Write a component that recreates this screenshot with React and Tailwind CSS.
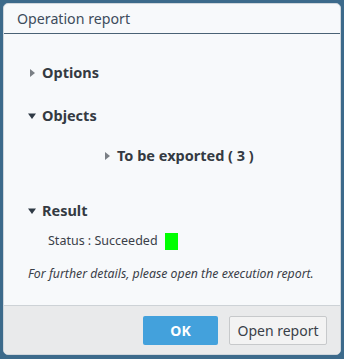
import React from "react";

const Caret = ({ open }) => (
  <svg width="8" height="8" viewBox="0 0 8 8" className="shrink-0">
    {open ? (
      <polygon points="0,1.5 8,1.5 4,7" fill="#2f3a45" />
    ) : (
      <polygon points="2,0 7,4 2,8" fill="#7a7f85" />
    )}
  </svg>
);

const App = () => {
  return (
    <div
      className="w-[344px] h-[359px] bg-[#3c6a8b] p-[3px] pb-[4px]"
      style={{ fontFamily: '"Noto Sans", "Open Sans", sans-serif' }}
    >
      <div className="h-full flex flex-col rounded-[5px] border border-[#cfd6dc] bg-[#f7f9fb] overflow-hidden">
        {/* title */}
        <div className="h-[30px] shrink-0 flex items-center pl-[13px] border-b border-[#4a6275] text-[14.2px] text-[#3d4c5c]">
          Operation report
        </div>

        {/* body */}
        <div className="flex-1 flex flex-col pl-[24px] pr-3 text-[#343a42]">
          <div className="flex items-center gap-[6px] mt-[29px] h-[20px]">
            <Caret />
            <span className="font-bold text-[14.5px]">Options</span>
          </div>

          <div className="flex items-center gap-[6px] mt-[23px] h-[20px]">
            <Caret open />
            <span className="font-bold text-[14.5px]">Objects</span>
          </div>

          <div className="flex items-center gap-[6px] mt-[20px] ml-[75px] h-[20px]">
            <Caret />
            <span className="font-bold text-[14.5px]">To be exported ( 3 )</span>
          </div>

          <div className="flex items-center gap-[6px] mt-[35px] h-[20px]">
            <Caret open />
            <span className="font-bold text-[14.5px]">Result</span>
          </div>

          <div className="flex items-center mt-[10px] ml-[20px] h-[20px] text-[12.5px] text-[#3a4048]">
            <span>Status : Succeeded</span>
            <span className="ml-[7px] w-[13px] h-[17px] bg-[#00ff00]" />
          </div>

          <div className="mt-[14px] text-[12.3px] italic text-[#3a4048]">
            For further details, please open the execution report.
          </div>
        </div>

        {/* footer */}
        <div className="h-[49px] shrink-0 flex items-center justify-end gap-[11px] pr-[13px] border-t border-[#cdd2d6] bg-[#e9eaeb]">
          <button className="w-[75px] h-[29px] rounded-[2px] bg-[#43a1dc] text-white font-bold text-[14px]">
            OK
          </button>
          <button className="w-[98px] h-[29px] rounded-[2px] border border-[#c7c9cb] bg-[#f3f3f3] text-[#3a4048] text-[14px]">
            Open report
          </button>
        </div>
      </div>
    </div>
  );
};

export default App;
